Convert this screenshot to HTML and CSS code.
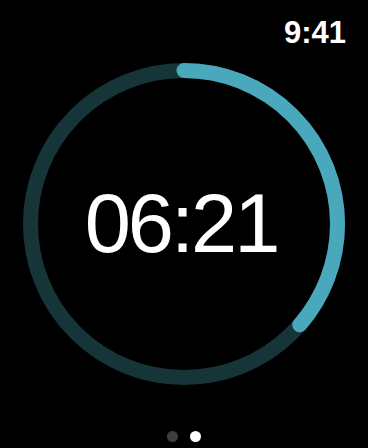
FILE: index.html
```html
<!DOCTYPE html>
<html lang="en">
<head>
  <meta charset="UTF-8">
  <meta name="viewport" content="width=device-width, initial-scale=1.0">
  <title>Timer</title>
  <link rel="stylesheet" href="styles.css">
</head>
<body>

  <div class="status">
    <span class="clock">9:41</span>
  </div>

  <div class="timer">
    <svg class="ring" width="336" height="336" viewBox="0 0 336 336">
      <circle class="track" cx="168" cy="168" r="153.5"></circle>
      <circle class="progress" cx="168" cy="168" r="153.5"
              stroke-dasharray="351 965" transform="rotate(-90 168 168)"></circle>
    </svg>
    <div class="time">06:21</div>
  </div>

  <div class="dots">
    <span class="dot"></span>
    <span class="dot active"></span>
  </div>

</body>
</html>
```

FILE: styles.css
```css
body {
  margin: 0;
  background-color: #000;
  color: #fff;
  font-family: "Liberation Sans", Arial, sans-serif;
  height: 448px;
  overflow: hidden;
}

.status {
  display: flex;
  justify-content: flex-end;
  height: 56px;
  padding-right: 22px;
}

.clock {
  font-size: 31px;
  font-weight: bold;
  line-height: 1;
  margin-top: 17px;
}

.timer {
  position: relative;
  width: 336px;
  height: 336px;
  margin: 0 auto;
}

.ring {
  display: block;
}

.track {
  fill: none;
  stroke: #163538;
  stroke-width: 15;
}

.progress {
  fill: none;
  stroke: #4aa8bc;
  stroke-width: 15;
  stroke-linecap: round;
}

.time {
  position: absolute;
  top: 0;
  left: 0;
  right: 0;
  bottom: 0;
  display: flex;
  align-items: center;
  justify-content: center;
  padding-right: 6px;
  font-size: 83px;
  letter-spacing: -3px;
}

.dots {
  display: flex;
  justify-content: center;
  gap: 12px;
  margin-top: 39px;
}

.dot {
  width: 11px;
  height: 11px;
  border-radius: 50%;
  background-color: #3e3e3e;
}

.dot.active {
  background-color: #fff;
}
```
